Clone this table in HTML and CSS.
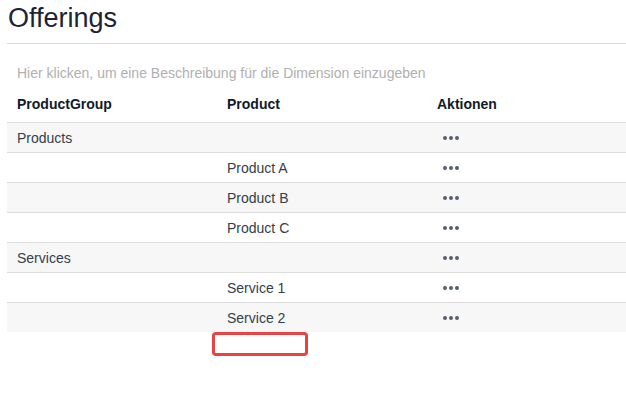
FILE: index.html
```html
<!DOCTYPE html>
<html lang="de">
<head>
    <meta charset="UTF-8">
    <title>Offerings</title>
    <link rel="stylesheet" href="styles.css">
</head>
<body>

    <header class="page-title">
        <h1>Offerings</h1>
    </header>

    <p class="description">Hier klicken, um eine Beschreibung für die Dimension einzugeben</p>

    <table class="offerings">
        <thead>
            <tr>
                <th>ProductGroup</th>
                <th>Product</th>
                <th>Aktionen</th>
            </tr>
        </thead>
        <tbody>
            <tr>
                <td>Products</td>
                <td></td>
                <td><svg class="more" viewBox="0 0 16 4"><circle cx="2" cy="2" r="2"/><circle cx="8" cy="2" r="2"/><circle cx="14" cy="2" r="2"/></svg></td>
            </tr>
            <tr>
                <td></td>
                <td>Product A</td>
                <td><svg class="more" viewBox="0 0 16 4"><circle cx="2" cy="2" r="2"/><circle cx="8" cy="2" r="2"/><circle cx="14" cy="2" r="2"/></svg></td>
            </tr>
            <tr>
                <td></td>
                <td>Product B</td>
                <td><svg class="more" viewBox="0 0 16 4"><circle cx="2" cy="2" r="2"/><circle cx="8" cy="2" r="2"/><circle cx="14" cy="2" r="2"/></svg></td>
            </tr>
            <tr>
                <td></td>
                <td>Product C</td>
                <td><svg class="more" viewBox="0 0 16 4"><circle cx="2" cy="2" r="2"/><circle cx="8" cy="2" r="2"/><circle cx="14" cy="2" r="2"/></svg></td>
            </tr>
            <tr>
                <td>Services</td>
                <td></td>
                <td><svg class="more" viewBox="0 0 16 4"><circle cx="2" cy="2" r="2"/><circle cx="8" cy="2" r="2"/><circle cx="14" cy="2" r="2"/></svg></td>
            </tr>
            <tr>
                <td></td>
                <td>Service 1</td>
                <td><svg class="more" viewBox="0 0 16 4"><circle cx="2" cy="2" r="2"/><circle cx="8" cy="2" r="2"/><circle cx="14" cy="2" r="2"/></svg></td>
            </tr>
            <tr>
                <td></td>
                <td>Service 2</td>
                <td><svg class="more" viewBox="0 0 16 4"><circle cx="2" cy="2" r="2"/><circle cx="8" cy="2" r="2"/><circle cx="14" cy="2" r="2"/></svg></td>
            </tr>
        </tbody>
    </table>

    <div class="new-row">
        <div class="new-input"></div>
    </div>

</body>
</html>
```

FILE: styles.css
```css
body {
    font-family: "Liberation Sans", Arial, sans-serif;
    margin: 0;
    padding: 0 0 0 7px;
    background-color: #fff;
    color: #32404e;
}
.page-title {
    border-bottom: 1px solid #ddd;
    padding: 2px 0 9px 1px;
}
.page-title h1 {
    margin: 0;
    font-size: 27px;
    line-height: 32px;
    font-weight: normal;
    color: #1b2433;
}
.description {
    margin: 21px 0 0 10px;
    font-size: 14px;
    line-height: 16px;
    color: #b0b0b0;
}
.offerings {
    width: 100%;
    border-collapse: collapse;
    margin-top: 15px;
    font-size: 14px;
    line-height: 16px;
}
.offerings th {
    box-sizing: border-box;
    text-align: left;
    font-weight: bold;
    color: #0f1a2a;
    padding: 0 10px 10px 10px;
    width: 210px;
    border-bottom: 1px solid #ddd;
}
.offerings th:last-child {
    width: auto;
}
.offerings td {
    height: 29px;
    padding: 0 10px;
    border-bottom: 1px solid #ddd;
}
.offerings tbody tr:nth-child(odd) td {
    background-color: #f7f7f7;
}
.offerings tbody tr:last-child td {
    border-bottom: none;
}
.more {
    display: block;
    width: 16px;
    height: 4px;
    margin-left: 6px;
    fill: #56606c;
}
.new-row {
    padding-left: 205px;
}
.new-input {
    width: 90px;
    height: 18px;
    border: 3px solid #e84242;
    border-radius: 4px;
}
```
